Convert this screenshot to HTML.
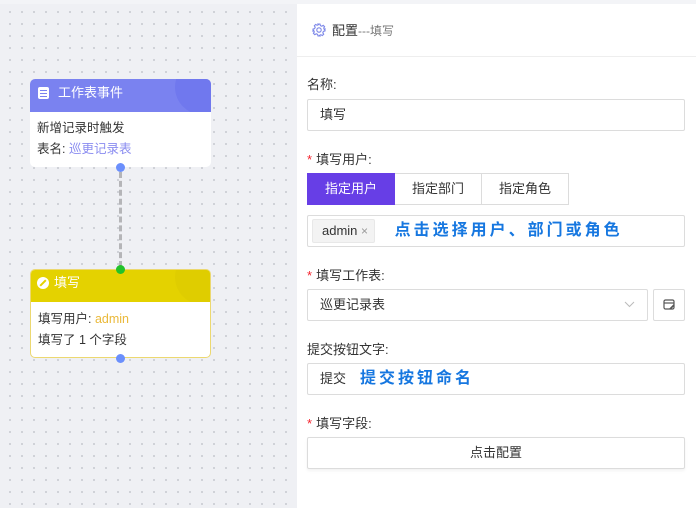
<!DOCTYPE html>
<html><head><meta charset="utf-8"><style>
*{box-sizing:border-box;margin:0;padding:0}
body{width:696px;height:508px;overflow:hidden;position:relative;font-family:"Liberation Sans","Noto Sans CJK SC",sans-serif;font-size:13px;color:#333;background:#eef0f4}
.canvas{position:absolute;left:0;top:0;width:297px;height:508px;background-color:#eff0f4;background-image:radial-gradient(#c6c8cf 0.8px,transparent 1px);background-size:12px 12px;background-position:4px 6px}
.a{position:absolute}
.node{position:absolute;left:30px;width:181px;background:#fff;border-radius:5px;overflow:hidden}
.hd{height:33px;color:#fff;font-size:13px;padding-left:28px;line-height:28px;position:relative;overflow:hidden}
.bd{padding:6px 7px;line-height:21px;font-size:12.5px;color:#333}
.dot{position:absolute;width:9px;height:9px;border-radius:50%}
.panel{position:absolute;left:297px;top:4px;width:399px;height:504px;background:#fff}
.lbl{position:absolute;left:10px;font-size:13px;color:#333}
.req{color:#f5222d;margin-right:4px}
.inp{position:absolute;left:10px;width:378px;height:32px;border:1px solid #dcdcdc;border-radius:2px;font-size:13px;line-height:30px;padding-left:12px;color:#333}
.btn{position:absolute;top:169px;height:32px;border:1px solid #dcdcdc;line-height:30px;text-align:center;font-size:13px;color:#333;background:#fff}
.blue{color:#1677e0;font-weight:bold;font-size:16px;letter-spacing:3px}
</style></head><body>
<div class="canvas"></div>
<div class="a" style="left:0;top:0;width:696px;height:4px;background:#f3f4f7"></div>

<div class="node" style="top:79px;height:88px">
 <div class="hd" style="background:#7a82f0">
  <div class="a" style="right:-20px;top:-20px;width:56px;height:56px;border-radius:50%;background:#7078ee"></div>
  <div class="a" style="left:8px;top:8px;width:11px;height:12px;background:#fff;border-radius:2px"></div>
  <div class="a" style="left:10px;top:11px;width:7px;height:1px;background:#7a82f0"></div>
  <div class="a" style="left:10px;top:14px;width:7px;height:1px;background:#7a82f0"></div>
  <div class="a" style="left:10px;top:17px;width:7px;height:1px;background:#7a82f0"></div>
  <span style="position:relative">工作表事件</span>
 </div>
 <div class="bd">新增记录时触发<br>表名: <span style="color:#8a8cf0">巡更记录表</span></div>
</div>
<div class="dot" style="left:116px;top:163px;background:#6b8ffc"></div>
<div class="a" style="left:119px;top:172px;height:95px;border-left:3px dashed #b5b5b8"></div>

<div class="node" style="top:269px;height:89px;border:1px solid #ecd870">
 <div class="hd" style="background:#e4d200;margin:-1px -1px 0 -1px;padding-left:24px">
  <div class="a" style="right:-20px;top:-20px;width:56px;height:56px;border-radius:50%;background:#dfcd00"></div>
  <div class="a" style="left:7px;top:8px;width:12px;height:12px;background:#fff;border-radius:50%"></div>
  <div class="a" style="left:12px;top:10px;width:2px;height:8px;background:#e4d200;transform:rotate(45deg)"></div>
  <span style="position:relative">填写</span>
 </div>
 <div class="bd" style="padding-top:7px">填写用户: <span style="color:#eab93a">admin</span><br>填写了 1 个字段</div>
</div>
<div class="dot" style="left:116px;top:265px;background:#22c22a"></div>
<div class="dot" style="left:116px;top:354px;background:#6b8ffc"></div>

<div class="panel">
 <svg class="a" style="left:15px;top:19px" width="14" height="14" viewBox="0 0 14 14"><circle cx="7" cy="7" r="2.2" fill="none" stroke="#7b86e8" stroke-width="1.1"/><path d="M6 1h2l.4 1.6 1.4.6 1.4-.9 1.4 1.4-.9 1.4.6 1.4L13 6v2l-1.6.4-.6 1.4.9 1.4-1.4 1.4-1.4-.9-1.4.6L8 13H6l-.4-1.6-1.4-.6-1.4.9-1.4-1.4.9-1.4-.6-1.4L1 8V6l1.6-.4.6-1.4-.9-1.4 1.4-1.4 1.4.9 1.4-.6z" fill="none" stroke="#7b86e8" stroke-width="1.1"/></svg>
 <div class="a" style="left:35px;top:16px;font-size:13px;color:#333">配置<span style="color:#777;font-size:12px">---填写</span></div>
 <div class="a" style="left:0;top:52px;width:399px;height:1px;background:#eee"></div>

 <div class="lbl" style="top:70px">名称:</div>
 <div class="inp" style="top:95px">填写</div>

 <div class="lbl" style="top:145px"><span class="req">*</span>填写用户:</div>
 <div class="btn" style="left:10px;width:88px;background:#673ee6;border-color:#673ee6;color:#fff">指定用户</div>
 <div class="btn" style="left:98px;width:87px;border-left:none">指定部门</div>
 <div class="btn" style="left:184px;width:88px">指定角色</div>

 <div class="inp" style="top:211px;padding-left:4px">
  <span style="display:inline-block;background:#f3f3f3;border:1px solid #e8e8e8;height:24px;line-height:22px;padding:0 6px 0 9px;vertical-align:top;margin-top:3px;border-radius:2px">admin <span style="color:#999;font-size:12px">×</span></span>
  <span class="blue" style="margin-left:16px;vertical-align:top">点击选择用户、部门或角色</span>
 </div>

 <div class="lbl" style="top:261px"><span class="req">*</span>填写工作表:</div>
 <div class="inp" style="top:285px;width:341px">巡更记录表
  <svg class="a" style="right:12px;top:11px" width="11" height="7" viewBox="0 0 11 7"><path d="M1 1l4.5 4.5L10 1" fill="none" stroke="#bbb"/></svg>
 </div>
 <div class="inp" style="top:285px;left:356px;width:32px;padding:0">
  <svg class="a" style="left:9px;top:9px" width="13" height="12" viewBox="0 0 13 12"><rect x="1" y="1" width="10" height="9" rx="1.5" fill="none" stroke="#555" stroke-width="1.2"/><path d="M1 4h10" stroke="#555" stroke-width="1.2"/><path d="M7 10l4-4" stroke="#555" stroke-width="1.6"/></svg>
 </div>

 <div class="lbl" style="top:335px">提交按钮文字:</div>
 <div class="inp" style="top:359px">提交<span class="blue" style="margin-left:14px">提交按钮命名</span></div>

 <div class="lbl" style="top:409px"><span class="req">*</span>填写字段:</div>
 <div class="inp" style="top:433px;text-align:center;padding:0;box-shadow:0 2px 3px rgba(0,0,0,0.05)">点击配置</div>
</div>
</body></html>
